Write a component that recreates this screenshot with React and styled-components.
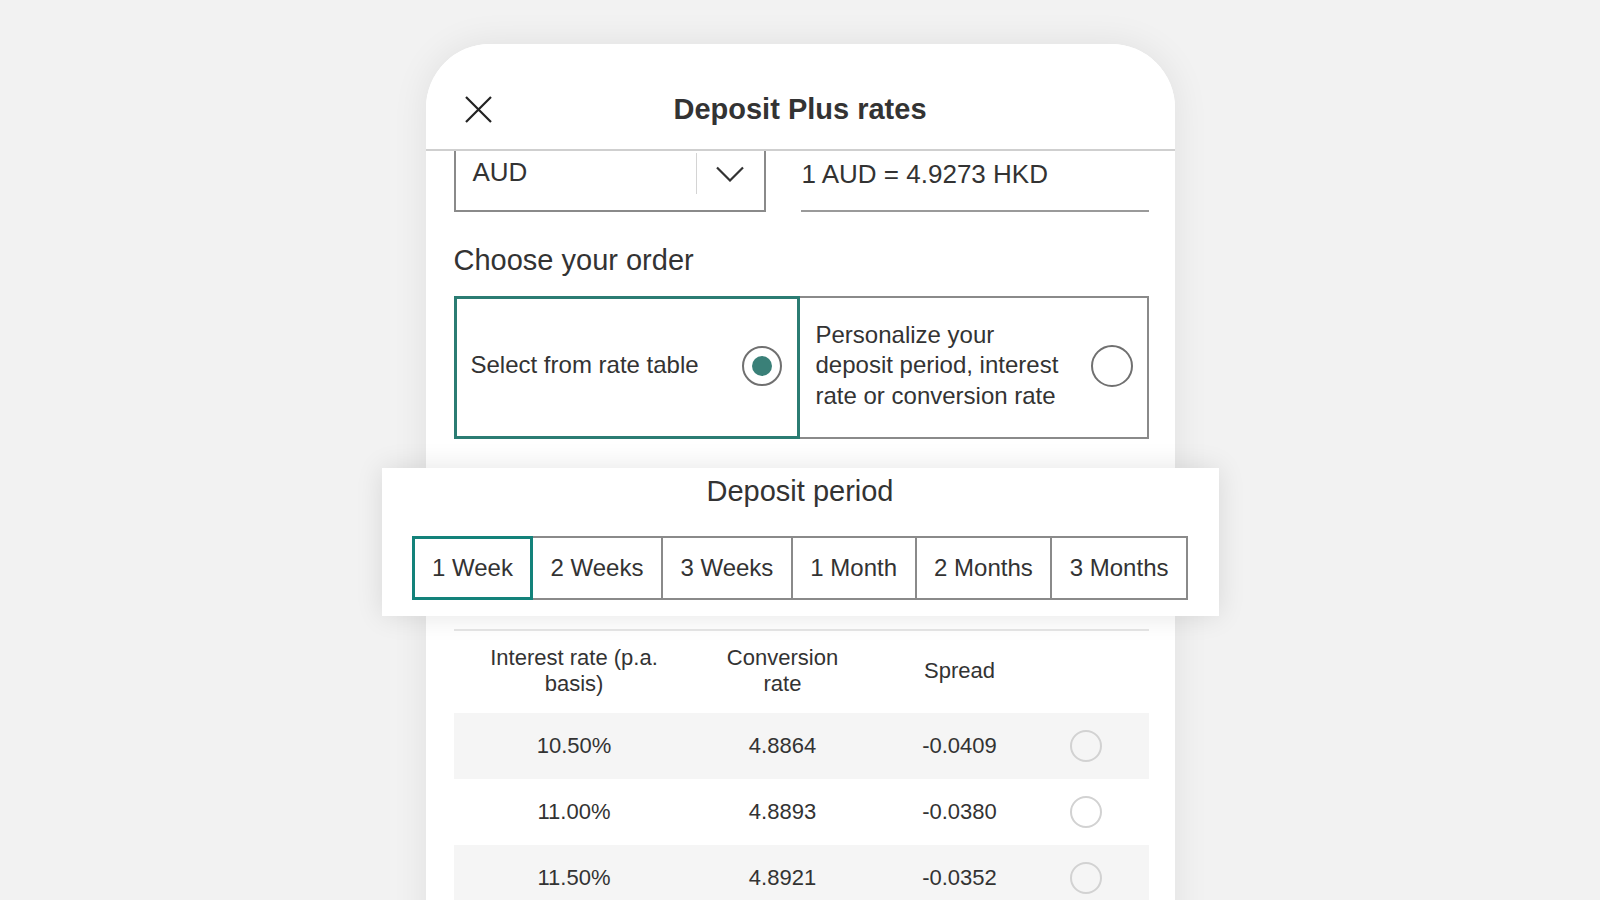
import React from 'react';
import styled, { createGlobalStyle } from 'styled-components';

const GlobalStyle = createGlobalStyle`
html, body {
  margin: 0;
  height: 100%;
  overflow: hidden;
  background: #f2f2f2;
  font-family: "Liberation Sans", Arial, sans-serif;
  color: #333;
}
`;

const teal = '#2b7c73';

const Page = styled.div`
  display: flex;
  justify-content: center;
  padding-top: 44px;
`;

const Card = styled.div`
  width: 749px;
  min-height: 900px;
  background: #fff;
  border-radius: 64px 64px 0 0;
  box-shadow: 0 0 36px rgba(0, 0, 0, 0.08);
`;

const Header = styled.header`
  position: relative;
  z-index: 2;
  display: grid;
  grid-template-columns: 1fr auto 1fr;
  align-items: center;
  height: 80px;
  padding-top: 25px;
  background: #fff;
  border-radius: 64px 64px 0 0;
  border-bottom: 2px solid #cfcfcf;
`;

const CloseButton = styled.button`
  justify-self: start;
  margin-left: 39px;
  width: 27px;
  height: 27px;
  padding: 0;
  border: none;
  background: none;
  display: flex;
`;

const Title = styled.h1`
  margin: 0;
  font-size: 29px;
  font-weight: 700;
  color: #333;
  line-height: 36px;
`;

const Body = styled.div`
  position: relative;
  z-index: 1;
  margin-top: -11px;
  padding: 0 26px 0 28px;
`;

const RateRow = styled.div`
  display: grid;
  grid-template-columns: 312px 1fr;
  gap: 35px;
  height: 72px;
`;

const Select = styled.div`
  display: flex;
  align-items: center;
  border: 2px solid #8a8a8a;
  border-top: none;
`;

const SelectValue = styled.span`
  flex: 1;
  padding: 0 0 5px 17px;
  font-size: 26px;
`;

const SelectToggle = styled.span`
  display: flex;
  align-items: center;
  justify-content: center;
  width: 67px;
  height: 41px;
  margin-bottom: 3px;
  border-left: 1px solid #d4d4d4;
`;

const RateField = styled.div`
  display: flex;
  align-items: center;
  padding: 0 0 1px 1px;
  font-size: 26px;
  border-bottom: 2px solid #9a9a9a;
`;

const SectionTitle = styled.h2`
  margin: 30px 0 18px;
  font-size: 29px;
  font-weight: 400;
  line-height: 36px;
`;

const Options = styled.div`
  display: grid;
  grid-template-columns: 346px 1fr;
  height: 143px;
`;

const Option = styled.label`
  display: flex;
  align-items: center;
  justify-content: space-between;
  gap: 12px;
  box-sizing: border-box;
  font-size: 24px;
  line-height: 30.5px;
  border: ${p => (p.$active ? `3px solid ${teal}` : '2px solid #8a8a8a')};
  ${p => !p.$active && 'border-left: none;'}
  padding: ${p => (p.$active ? '0 15px 4px 14px' : '0 14px 4px 16px')};
`;

const Radio = styled.span`
  flex: none;
  display: flex;
  align-items: center;
  justify-content: center;
  box-sizing: border-box;
  width: ${p => p.$size}px;
  height: ${p => p.$size}px;
  border-radius: 50%;
  border: 2px solid ${p => p.$color};
  &::after {
    content: '';
    display: ${p => (p.$checked ? 'block' : 'none')};
    width: 20px;
    height: 20px;
    border-radius: 50%;
    background: #3a8078;
  }
`;

const PeriodPanel = styled.section`
  margin: 29px -70px 0 -72px;
  padding: 5px 0 16px;
  background: #fff;
  box-shadow: 0 0 26px rgba(0, 0, 0, 0.11);
  display: flex;
  flex-direction: column;
  align-items: center;
`;

const PanelTitle = styled.h3`
  margin: 0 0 27px;
  font-size: 29px;
  font-weight: 400;
  line-height: 36px;
`;

const Tabs = styled.div`
  display: flex;
  padding-left: 2px;
`;

const Tab = styled.button`
  position: relative;
  z-index: ${p => (p.$active ? 1 : 0)};
  height: 64px;
  margin-left: -2px;
  padding: 0 ${p => (p.$active ? '17px' : '17.5px')};
  font-family: inherit;
  font-size: 24px;
  color: #333;
  background: #fff;
  border: ${p => (p.$active ? `3px solid #13827a` : '2px solid #8a8a8a')};
`;

const Divider = styled.div`
  margin-top: 13px;
  height: 2px;
  background: #e2e2e2;
`;

const Table = styled.div`
  display: grid;
  grid-template-columns: 241px 176px 178px 1fr;
`;

const HeadCell = styled.div`
  box-sizing: border-box;
  height: 82px;
  display: flex;
  align-items: center;
  justify-content: center;
  padding: 0 16px 3px;
  text-align: center;
  font-size: 22px;
  line-height: 25.5px;
`;

const Cell = styled.div`
  height: 66px;
  display: flex;
  align-items: center;
  justify-content: center;
  font-size: 22px;
  background: ${p => (p.$shade ? '#f5f5f5' : '#fff')};
  ${p => p.$radio && 'padding-right: 26px;'}
`;

const rates = [
  ['10.50%', '4.8864', '-0.0409'],
  ['11.00%', '4.8893', '-0.0380'],
  ['11.50%', '4.8921', '-0.0352'],
];

const periods = ['1 Week', '2 Weeks', '3 Weeks', '1 Month', '2 Months', '3 Months'];

export default function App() {
  return (
    <>
      <GlobalStyle />
      <Page>
        <Card>
          <Header>
            <CloseButton aria-label="Close">
              <svg width="27" height="27" viewBox="0 0 27 27">
                <path d="M1 1 L26 26 M26 1 L1 26" stroke="#222" strokeWidth="2.2" fill="none" />
              </svg>
            </CloseButton>
            <Title>Deposit Plus rates</Title>
          </Header>
          <Body>
            <RateRow>
              <Select>
                <SelectValue>AUD</SelectValue>
                <SelectToggle>
                  <svg width="28" height="16" viewBox="0 0 28 16">
                    <polyline points="1,1.5 14,14.5 27,1.5" stroke="#333" strokeWidth="2.2" fill="none" />
                  </svg>
                </SelectToggle>
              </Select>
              <RateField>1 AUD = 4.9273 HKD</RateField>
            </RateRow>

            <SectionTitle>Choose your order</SectionTitle>
            <Options>
              <Option $active>
                Select from rate table
                <Radio $size={40} $color="#707070" $checked />
              </Option>
              <Option>
                <span>Personalize your<br />deposit period, interest<br />rate or conversion rate</span>
                <Radio $size={42} $color="#707070" />
              </Option>
            </Options>

            <PeriodPanel>
              <PanelTitle>Deposit period</PanelTitle>
              <Tabs>
                {periods.map((p, i) => (
                  <Tab key={p} $active={i === 0}>{p}</Tab>
                ))}
              </Tabs>
            </PeriodPanel>

            <Divider />
            <Table>
              <HeadCell>Interest rate (p.a. basis)</HeadCell>
              <HeadCell>Conversion rate</HeadCell>
              <HeadCell>Spread</HeadCell>
              <HeadCell />
              {rates.map((r, i) => (
                <React.Fragment key={r[0]}>
                  <Cell $shade={i % 2 === 0}>{r[0]}</Cell>
                  <Cell $shade={i % 2 === 0}>{r[1]}</Cell>
                  <Cell $shade={i % 2 === 0}>{r[2]}</Cell>
                  <Cell $shade={i % 2 === 0} $radio>
                    <Radio $size={32} $color="#d2d2d2" />
                  </Cell>
                </React.Fragment>
              ))}
            </Table>
          </Body>
        </Card>
      </Page>
    </>
  );
}
